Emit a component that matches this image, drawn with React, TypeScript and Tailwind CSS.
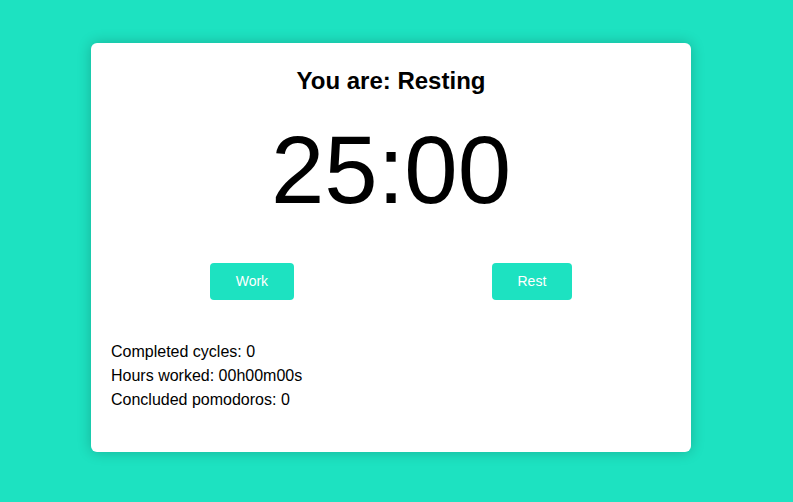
export default function App() {
  const stats = [
    "Completed cycles: 0",
    "Hours worked: 00h00m00s",
    "Concluded pomodoros: 0",
  ];

  return (
    <div
      className="min-h-screen bg-[#1de2c1] pl-[91px] pt-[43px]"
      style={{ fontFamily: '"Liberation Sans", Arial, sans-serif' }}
    >
      <div className="w-[600px] rounded-[6px] bg-white p-[20px] pb-[40px] text-black shadow-[0_0_14px_rgba(0,0,0,0.22)]">
        <h1 className="mt-[4px] text-center text-[24px] font-bold leading-[28px]">You are: Resting</h1>
        <div className="mt-[27px] text-center text-[96px] leading-[96px]">25:00</div>
        <div className="mt-[45px] flex justify-around">
          <button className="rounded-[4px] bg-[#1de2c1] px-[26px] py-[10px] text-[14px] leading-[17px] text-white">
            Work
          </button>
          <button className="rounded-[4px] bg-[#1de2c1] px-[26px] py-[10px] text-[14px] leading-[17px] text-white">
            Rest
          </button>
        </div>
        <div className="mt-[40px] text-[16px] leading-[24px]">
          {stats.map((s) => (
            <p key={s}>{s}</p>
          ))}
        </div>
      </div>
    </div>
  );
}
